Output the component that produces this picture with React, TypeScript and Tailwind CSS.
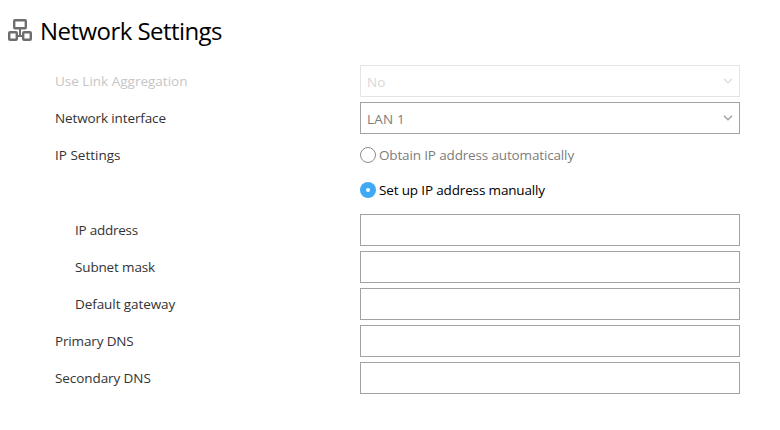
import React, { useState } from 'react';

interface FieldRowProps {
  label?: string;
  labelClass?: string;
  className?: string;
  children: React.ReactNode;
}

const FieldRow: React.FC<FieldRowProps> = ({ label, labelClass = '', className = 'mb-[5px]', children }) => (
  <div className={`flex h-8 items-center ${className}`}>
    <div className="w-[305px] shrink-0">
      <span className={`block whitespace-nowrap ${labelClass}`}>{label}</span>
    </div>
    {children}
  </div>
);

interface DropdownProps {
  value: string;
  disabled?: boolean;
}

const Dropdown: React.FC<DropdownProps> = ({ value, disabled }) => (
  <button
    type="button"
    disabled={disabled}
    className={`flex h-8 w-[380px] items-center justify-between border pl-1.5 pr-1.5 ${
      disabled ? 'border-[#e4e4e4] text-[#d8d8d8]' : 'border-[#a2a2a2] text-[#7d7d7d]'
    }`}
  >
    <span className="pt-0.5 tracking-[0.2px]">{value}</span>
    <svg
      width="10"
      height="6"
      viewBox="0 0 10 6"
      fill="none"
      strokeWidth="1.4"
      className={disabled ? 'stroke-[#dedede]' : 'stroke-[#a0a0a0]'}
    >
      <path d="M1 0.7 5 4.7 9 0.7" />
    </svg>
  </button>
);

interface RadioProps {
  label: string;
  checked: boolean;
  labelClass: string;
  onSelect: () => void;
}

const Radio: React.FC<RadioProps> = ({ label, checked, labelClass, onSelect }) => (
  <button type="button" role="radio" aria-checked={checked} onClick={onSelect} className="flex items-center gap-[3px]">
    {checked ? (
      <span className="flex size-4 items-center justify-center rounded-full bg-[#3fa9f5]">
        <span className="size-1 rounded-full bg-white" />
      </span>
    ) : (
      <span className="size-4 rounded-full border border-[#8c8c8c]" />
    )}
    <span className={`whitespace-nowrap tracking-[-0.15px] ${labelClass}`}>{label}</span>
  </button>
);

const addressFields = [
  { label: 'IP address', labelClass: 'pl-5 tracking-[-0.25px]' },
  { label: 'Subnet mask', labelClass: 'pl-5 tracking-[-0.15px]' },
  { label: 'Default gateway', labelClass: 'pl-5 tracking-[-0.08px]' },
  { label: 'Primary DNS', labelClass: 'tracking-[-0.15px]' },
  { label: 'Secondary DNS', labelClass: 'tracking-[-0.08px]' },
];

const NetworkIcon: React.FC = () => (
  <svg width="24" height="22" viewBox="0 0 24 22" fill="none" stroke="#6e6e6e" strokeWidth="2.4">
    <rect x="6.2" y="1.2" width="11.6" height="8" rx="0.8" />
    <rect x="1.2" y="13.2" width="7.6" height="7.6" rx="0.8" />
    <rect x="15.2" y="13.2" width="7.6" height="7.6" rx="0.8" />
    <path d="M12 10V17M9 17H15" strokeWidth="2" />
  </svg>
);

const App: React.FC = () => {
  const [manual, setManual] = useState(true);

  return (
    <div className="h-[430px] w-[780px] overflow-hidden bg-white font-['Open_Sans','Noto_Sans',sans-serif] text-[13.5px] leading-5 text-[#333]">
      <header className="flex h-[65px] items-start gap-2 pl-2 pt-[15px]">
        <div className="w-6 pt-1">
          <NetworkIcon />
        </div>
        <h1 className="whitespace-nowrap text-2xl tracking-[-0.55px] text-black">Network Settings</h1>
      </header>

      <main className="pl-[55px]">
        <FieldRow label="Use Link Aggregation" labelClass="text-[#c6c6c6]">
          <Dropdown value="No" disabled />
        </FieldRow>
        <FieldRow label="Network interface" labelClass="tracking-[-0.12px]">
          <Dropdown value="LAN 1" />
        </FieldRow>

        {/* IP mode */}
        <FieldRow label="IP Settings" className="mb-[3px]">
          <Radio
            label="Obtain IP address automatically"
            checked={!manual}
            labelClass="text-[#7d7d7d]"
            onSelect={() => setManual(false)}
          />
        </FieldRow>
        <FieldRow className="mb-2">
          <Radio
            label="Set up IP address manually"
            checked={manual}
            labelClass="text-black"
            onSelect={() => setManual(true)}
          />
        </FieldRow>

        {/* Addresses */}
        {addressFields.map(field => (
          <FieldRow key={field.label} label={field.label} labelClass={field.labelClass}>
            <input
              type="text"
              aria-label={field.label}
              className="h-8 w-[380px] border border-[#a2a2a2] px-1.5 outline-none"
            />
          </FieldRow>
        ))}
      </main>
    </div>
  );
};

export default App;
